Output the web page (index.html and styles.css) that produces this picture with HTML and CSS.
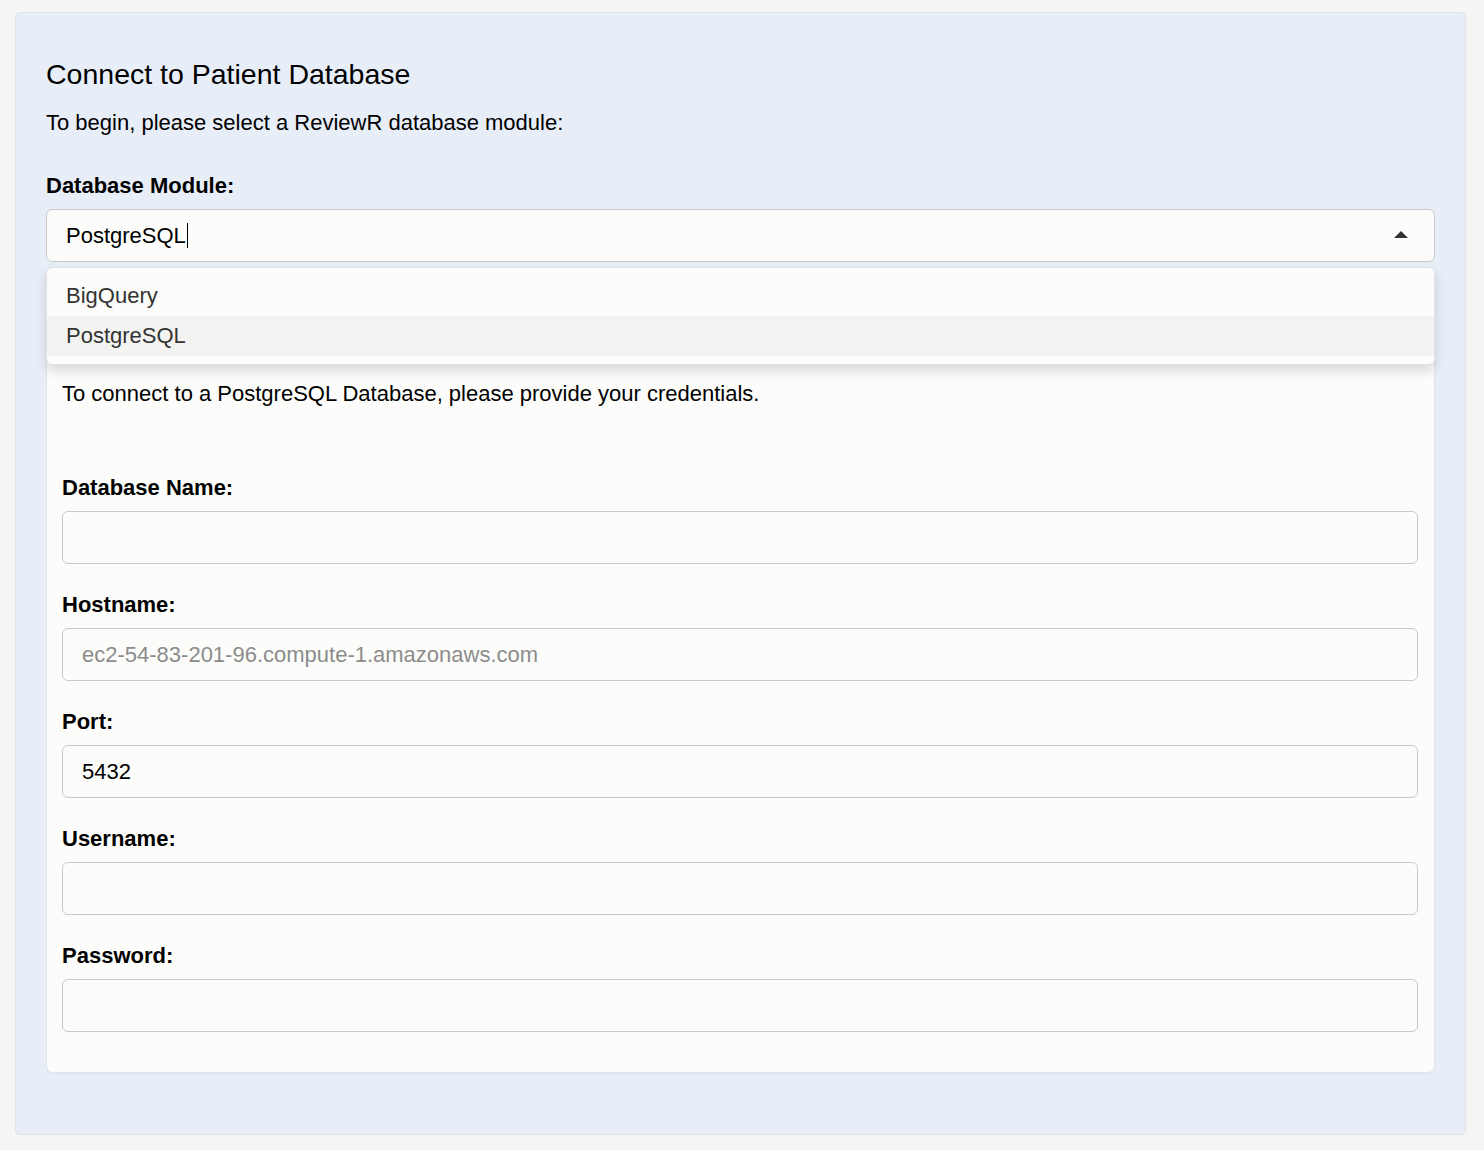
FILE: index.html
```html
<!DOCTYPE html>
<html lang="en">
<head>
<meta charset="utf-8">
<title>Connect to Patient Database</title>
<link rel="stylesheet" href="styles.css">
</head>
<body>
<div class="page">
  <div class="panel">
    <h3 class="title">Connect to Patient Database</h3>
    <p class="intro">To begin, please select a ReviewR database module:</p>
    <label class="label">Database Module:</label>
    <div class="select-wrap">
      <div class="select">
        <span class="select-value">PostgreSQL</span><span class="cursor"></span>
        <span class="caret"></span>
      </div>
      <div class="dropdown">
        <div class="option">BigQuery</div>
        <div class="option active">PostgreSQL</div>
      </div>
    </div>
    <div class="card">
      <p class="card-intro">To connect to a PostgreSQL Database, please provide your credentials.</p>
      <div class="field">
        <label class="label">Database Name:</label>
        <input class="input" type="text">
      </div>
      <div class="field">
        <label class="label">Hostname:</label>
        <input class="input" type="text" placeholder="ec2-54-83-201-96.compute-1.amazonaws.com">
      </div>
      <div class="field">
        <label class="label">Port:</label>
        <input class="input" type="text" value="5432">
      </div>
      <div class="field">
        <label class="label">Username:</label>
        <input class="input" type="text">
      </div>
      <div class="field last">
        <label class="label">Password:</label>
        <input class="input" type="password">
      </div>
    </div>
  </div>
</div>
</body>
</html>
```

FILE: styles.css
```css
* { box-sizing: border-box; }
html, body {
  margin: 0;
  padding: 0;
  background: #f5f5f3;
  font-family: "Liberation Sans", Arial, Helvetica, sans-serif;
  color: #000;
}
.page {
  padding: 12px 18px 16px 15px;
}
.panel {
  background: #e8eef8;
  border: 1px solid #dfe2e6;
  border-radius: 5px;
  padding: 44px 30px 61px 30px;
  min-height: 1122px;
}
.title {
  margin: 0;
  font-size: 28.5px;
  font-weight: normal;
  line-height: 34px;
}
.intro {
  margin: 16px 0 0 0;
  font-size: 22px;
  line-height: 31px;
}
.label {
  display: block;
  font-size: 22px;
  font-weight: bold;
  line-height: 32px;
  margin-bottom: 7px;
}
.panel > .label {
  margin-top: 32px;
}
.select-wrap {
  position: relative;
}
.select {
  display: flex;
  align-items: center;
  height: 53px;
  border: 1px solid #c9c9c9;
  border-radius: 6px;
  background: #fcfdfa;
  padding: 0 19px;
  font-size: 22px;
}
.select-value {
  line-height: 26px;
}
.cursor {
  display: inline-block;
  width: 1px;
  height: 25px;
  background: #000;
  margin-left: 1px;
}
.caret {
  margin-left: auto;
  margin-right: 7px;
  width: 0;
  height: 0;
  border-left: 7px solid transparent;
  border-right: 7px solid transparent;
  border-bottom: 7px solid #333;
  margin-top: -3px;
}
.dropdown {
  position: absolute;
  left: 0;
  right: 0;
  top: 58px;
  z-index: 5;
  background: #fcfdfa;
  border: 1px solid #e0e2e4;
  border-radius: 6px;
  box-shadow: 0 6px 12px rgba(0, 0, 0, 0.14);
  padding: 8px 0;
}
.option {
  height: 40px;
  line-height: 40px;
  padding: 0 19px;
  font-size: 22px;
  color: #333;
}
.option.active {
  background: #f3f4f2;
}
.card {
  margin-top: 39px;
  background: #fcfdfa;
  border: 1px solid #e2e5e9;
  border-radius: 7px;
  box-shadow: 0 1px 2px rgba(0, 0, 0, 0.04);
  padding: 16px 16px 16px 15px;
}
.card-intro {
  margin: 60px 0 63px 0;
  font-size: 22px;
  line-height: 31px;
}
.field {
  margin-bottom: 25px;
}
.field.last {
  margin-bottom: 24px;
}
.input {
  display: block;
  width: 100%;
  height: 53px;
  border: 1px solid #c9c9c9;
  border-radius: 6px;
  background: #fcfdfa;
  padding: 0 19px;
  font-family: "Liberation Sans", Arial, Helvetica, sans-serif;
  font-size: 22px;
  color: #000;
  outline: none;
}
.input::placeholder {
  color: #8c8c8c;
}
```
